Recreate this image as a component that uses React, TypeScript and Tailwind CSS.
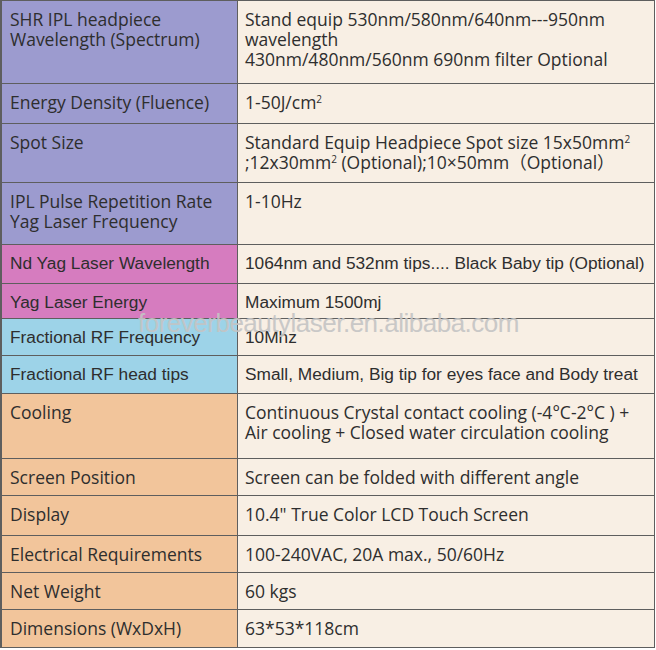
import React from "react";

type Row = {
  h: number;
  left: string[];
  right: React.ReactNode[];
  color: string;
  arial?: boolean;
};

const HUM = "font-['Open_Sans','Noto_Sans_CJK_SC',sans-serif]";
const ARI = "font-['Liberation_Sans','Noto_Sans_CJK_SC',sans-serif]";

const Sq = () => <span className="text-[10px] align-[6px] leading-none">2</span>;

const rows: Row[] = [
  {
    h: 83,
    color: "bg-[#9c9bcf]",
    left: ["SHR IPL headpiece", "Wavelength (Spectrum)"],
    right: [
      "Stand equip 530nm/580nm/640nm---950nm",
      "wavelength",
      "430nm/480nm/560nm 690nm filter Optional",
    ],
  },
  {
    h: 40,
    color: "bg-[#9c9bcf]",
    left: ["Energy Density (Fluence)"],
    right: [
      <>
        1-50J/cm
        <Sq />
      </>,
    ],
  },
  {
    h: 59,
    color: "bg-[#9c9bcf]",
    left: ["Spot Size"],
    right: [
      <>
        Standard Equip Headpiece Spot size 15x50mm
        <Sq />
      </>,
      <>
        ;12x30mm
        <Sq /> (Optional);10×50mm（Optional）
      </>,
    ],
  },
  {
    h: 62,
    color: "bg-[#9c9bcf]",
    left: ["IPL Pulse Repetition Rate", "Yag Laser Frequency"],
    right: ["1-10Hz"],
  },
  {
    h: 39,
    color: "bg-[#d67cbf]",
    arial: true,
    left: ["Nd Yag Laser Wavelength"],
    right: ["1064nm and 532nm tips.... Black Baby tip (Optional)"],
  },
  { h: 35, color: "bg-[#d67cbf]", arial: true, left: ["Yag Laser Energy"], right: ["Maximum 1500mj"] },
  { h: 37, color: "bg-[#9dd3e8]", arial: true, left: ["Fractional RF Frequency"], right: ["10Mhz"] },
  {
    h: 38,
    color: "bg-[#9dd3e8]",
    arial: true,
    left: ["Fractional RF head tips"],
    right: ["Small, Medium, Big tip for eyes face and Body treat"],
  },
  {
    h: 65,
    color: "bg-[#f2c59b]",
    left: ["Cooling"],
    right: ["Continuous Crystal contact cooling (-4°C-2°C ) +", "Air cooling + Closed water circulation cooling"],
  },
  { h: 37, color: "bg-[#f2c59b]", left: ["Screen Position"], right: ["Screen can be folded with different angle"] },
  { h: 40, color: "bg-[#f2c59b]", left: ["Display"], right: ['10.4" True Color LCD Touch Screen'] },
  {
    h: 37,
    color: "bg-[#f2c59b]",
    left: ["Electrical Requirements"],
    right: ["100-240VAC, 20A max., 50/60Hz"],
  },
  { h: 37, color: "bg-[#f2c59b]", left: ["Net Weight"], right: ["60 kgs"] },
  { h: 38, color: "bg-[#f2c59b]", left: ["Dimensions (WxDxH)"], right: ["63*53*118cm"] },
];

export default function App() {
  return (
    <div className="w-[656px] h-[650px] bg-white">
      <div className="relative w-[655px] border-t border-l-2 border-r border-[#5e5e5e] bg-[#f8efe4]">
        {rows.map((r, i) => (
          <div
            key={i}
            className="grid grid-cols-[236px_1fr] border-b border-[#5e5e5e] text-[#2e2e2e]"
            style={{ height: r.h }}
          >
            <div
              className={`${r.color} border-r border-[#5e5e5e] pl-2 ${
                r.arial ? `${ARI} text-[17.3px] leading-[20px] pt-[8px]` : `${HUM} text-[17.5px] leading-[20px] pt-[8px]`
              }`}
            >
              {r.left.map((t, j) => (
                <div key={j} className="whitespace-nowrap">
                  {t}
                </div>
              ))}
            </div>
            <div
              className={`pl-[7px] ${
                r.arial ? `${ARI} text-[17.3px] leading-[20px] pt-[8px]` : `${HUM} text-[17.5px] leading-[20px] pt-[8px]`
              }`}
            >
              {r.right.map((t, j) => (
                <div key={j} className="whitespace-nowrap">
                  {t}
                </div>
              ))}
            </div>
          </div>
        ))}
        <div className="pointer-events-none absolute left-[136px] top-[307px] font-['Liberation_Sans',sans-serif] text-[26px] leading-[30px] tracking-[-0.5px] text-[#c4c4c4] opacity-90 whitespace-nowrap">
          foreverbeautylaser.en.alibaba.com
        </div>
      </div>
    </div>
  );
}
